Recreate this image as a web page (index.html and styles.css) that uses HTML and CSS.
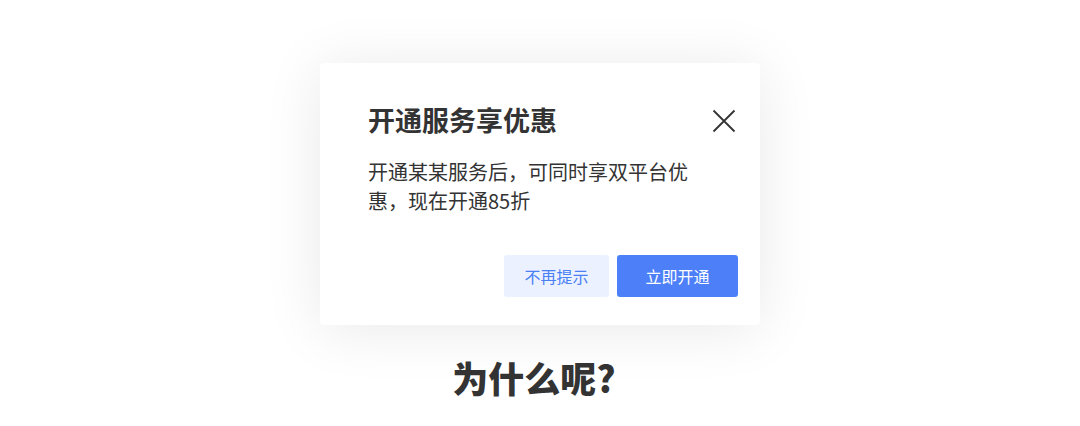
FILE: index.html
```html
<!DOCTYPE html>
<html lang="zh-CN">

<head>
    <meta charset="UTF-8">
    <title>开通服务享优惠</title>
    <link rel="stylesheet" href="styles.css">
</head>

<body>
    <div class="escena">
        <div class="dialogo">
            <div class="cabecera">
                <h2>开通服务享优惠</h2>
                <button class="cerrar" aria-label="关闭">
                    <svg width="24" height="24" viewBox="0 0 24 24">
                        <path d="M1.5 1.5 L22.5 22.5 M22.5 1.5 L1.5 22.5" stroke="#333" stroke-width="1.8" fill="none" />
                    </svg>
                </button>
            </div>
            <p class="texto">开通某某服务后，可同时享双平台优惠，现在开通85折</p>
            <div class="acciones">
                <button class="secundario">不再提示</button>
                <button class="primario">立即开通</button>
            </div>
        </div>
        <div class="pregunta">为什么呢?</div>
    </div>
</body>

</html>
```

FILE: styles.css
```css
body {
    margin: 0;
    background-color: #fff;
    font-family: "Noto Sans CJK SC", "Noto Sans", sans-serif;
    color: #333;
}

.escena {
    display: flex;
    flex-direction: column;
    align-items: center;
    padding-top: 63px;
}

.dialogo {
    width: 440px;
    height: 262px;
    box-sizing: border-box;
    padding: 39px 22px 28px 48px;
    background: white;
    border-radius: 4px;
    box-shadow: 0 4px 60px rgba(0, 0, 0, 0.09);
    display: flex;
    flex-direction: column;
}

.cabecera {
    display: flex;
    justify-content: space-between;
    align-items: center;
    height: 36px;
}

.cabecera h2 {
    margin: 0;
    font-size: 27px;
    font-weight: bold;
    line-height: 36px;
    color: #333;
}

.cerrar {
    border: none;
    background: none;
    padding: 0;
    margin-right: 2px;
    margin-top: 2px;
    width: 24px;
    height: 24px;
    cursor: pointer;
}

.cerrar svg {
    display: block;
}

.texto {
    margin: 19px 0 0;
    width: 330px;
    font-size: 20px;
    line-height: 29px;
    color: #333;
}

.acciones {
    margin-top: auto;
    display: flex;
    justify-content: flex-end;
    gap: 8px;
}

.acciones button {
    height: 42px;
    border: none;
    border-radius: 3px;
    font-family: inherit;
    font-size: 16px;
    cursor: pointer;
}

.secundario {
    width: 105px;
    background-color: #ebf1fe;
    color: #4a7ff5;
}

.primario {
    width: 121px;
    background-color: #4d80f8;
    color: white;
}

.pregunta {
    margin-top: 30px;
    margin-right: 12px;
    font-size: 36px;
    font-weight: 900;
    line-height: 44px;
    color: #333;
}
```
